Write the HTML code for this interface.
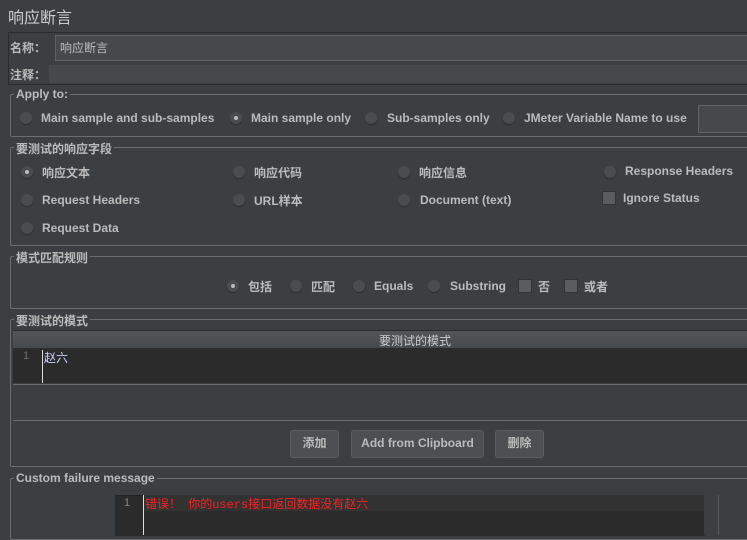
<!DOCTYPE html><html><head><meta charset="utf-8"><style>
body{margin:0;width:747px;height:532px;background:#3c3f41;overflow:hidden;position:relative;font-family:"Liberation Sans","Noto Sans CJK SC",sans-serif;color:#bbbbbb;font-size:12px}
.a{position:absolute;white-space:nowrap}
.b{font-weight:bold}
.fs{position:absolute;border:1px solid #6b6e70;border-radius:2px}
.lg{position:absolute;background:#3c3f41;padding:0 2px;top:-8px;left:3px;font-weight:bold;color:#bbbbbb}
.r{position:absolute;width:12px;height:12px;border-radius:50%;background:#4a4d4f;box-shadow:0 1px 1px #2a2a2a}
.r.on::after{content:"";position:absolute;left:4px;top:4px;width:4px;height:4px;border-radius:50%;background:#bbb}
.c{position:absolute;width:12px;height:12px;background:#5a5d5f;border:1px solid #333}
.btn{position:absolute;height:26px;border:1px solid #5a5d5f;border-radius:3px;background:#4c5052;text-align:center;line-height:25px;font-weight:bold;color:#bbb}
</style></head><body>
<div class="a" style="left:8px;top:4px;font-size:16px;color:#ccc">响应断言</div>
<div style="position:absolute;left:8px;top:32px;width:745px;height:51px;border:1px solid #2b2b2b"></div>
<div class="a b" style="left:10px;top:39px">名称：</div>
<div style="position:absolute;left:55px;top:35px;width:700px;height:24px;background:#45494a;border:1px solid #5f6365"></div>
<div class="a" style="left:60px;top:39px;color:#bbb">响应断言</div>
<div class="a b" style="left:10px;top:66px">注释：</div>
<div style="position:absolute;left:49px;top:65px;width:700px;height:18px;background:#45494a"></div>

<div class="fs" style="left:10px;top:94px;width:745px;height:41px"><span class="lg">Apply to:</span></div>
<div class="r" style="left:20px;top:112px"></div><div class="a b" style="left:41px;top:111px">Main sample and sub-samples</div>
<div class="r on" style="left:230px;top:112px"></div><div class="a b" style="left:251px;top:111px">Main sample only</div>
<div class="r" style="left:365px;top:112px"></div><div class="a b" style="left:387px;top:111px">Sub-samples only</div>
<div class="r" style="left:503px;top:112px"></div><div class="a b" style="left:524px;top:111px">JMeter Variable Name to use</div>
<div style="position:absolute;left:698px;top:105px;width:60px;height:26px;background:#45494a;border:1px solid #5f6365"></div>

<div class="fs" style="left:10px;top:147px;width:745px;height:97px"><span class="lg">要测试的响应字段</span></div>
<div class="r on" style="left:21px;top:166px"></div><div class="a b" style="left:42px;top:164px">响应文本</div>
<div class="r" style="left:233px;top:166px"></div><div class="a b" style="left:254px;top:164px">响应代码</div>
<div class="r" style="left:398px;top:166px"></div><div class="a b" style="left:419px;top:164px">响应信息</div>
<div class="r" style="left:604px;top:166px"></div><div class="a b" style="left:625px;top:164px">Response Headers</div>
<div class="r" style="left:21px;top:194px"></div><div class="a b" style="left:42px;top:193px">Request Headers</div>
<div class="r" style="left:233px;top:194px"></div><div class="a b" style="left:254px;top:192px">URL样本</div>
<div class="r" style="left:398px;top:194px"></div><div class="a b" style="left:420px;top:193px">Document (text)</div>
<div class="c" style="left:602px;top:191px"></div><div class="a b" style="left:623px;top:191px">Ignore Status</div>
<div class="r" style="left:21px;top:222px"></div><div class="a b" style="left:42px;top:221px">Request Data</div>

<div class="fs" style="left:10px;top:256px;width:745px;height:51px"><span class="lg">模式匹配规则</span></div>
<div class="r on" style="left:227px;top:280px"></div><div class="a b" style="left:248px;top:278px">包括</div>
<div class="r" style="left:290px;top:280px"></div><div class="a b" style="left:311px;top:278px">匹配</div>
<div class="r" style="left:353px;top:280px"></div><div class="a b" style="left:374px;top:279px">Equals</div>
<div class="r" style="left:428px;top:280px"></div><div class="a b" style="left:450px;top:279px">Substring</div>
<div class="c" style="left:518px;top:279px"></div><div class="a b" style="left:538px;top:278px">否</div>
<div class="c" style="left:564px;top:279px"></div><div class="a b" style="left:584px;top:278px">或者</div>

<div class="fs" style="left:10px;top:319px;width:745px;height:146px"><span class="lg">要测试的模式</span></div>
<div style="position:absolute;left:13px;top:330px;width:740px;height:18px;background:linear-gradient(#52565a,#46494b);border-top:1px solid #2b2b2b"></div>
<div class="a" style="left:379px;top:332px;color:#ccc">要测试的模式</div>
<div style="position:absolute;left:13px;top:348px;width:740px;height:35px;background:#2b2b2b"></div>
<div class="a" style="left:23px;top:350px;color:#707070;font-size:11px">1</div>
<div style="position:absolute;left:42px;top:350px;width:1px;height:33px;background:#ddd"></div>
<div class="a" style="left:44px;top:349px;color:#c8d8ff">赵六</div>
<div style="position:absolute;left:13px;top:384px;width:740px;height:35px;border-top:1px solid #6b6e70;border-bottom:1px solid #6b6e70"></div>
<div class="btn" style="left:290px;top:430px;width:47px">添加</div>
<div class="btn" style="left:351px;top:430px;width:131px">Add from Clipboard</div>
<div class="btn" style="left:495px;top:430px;width:47px">删除</div>

<div class="fs" style="left:10px;top:478px;width:745px;height:60px"><span class="lg">Custom failure message</span></div>
<div style="position:absolute;left:115px;top:495px;width:590px;height:40px;background:#2b2b2b;border-top:1px solid #222"></div>
<div style="position:absolute;left:144px;top:495px;width:560px;height:16px;background:#323232"></div>
<div style="position:absolute;left:704px;top:495px;width:14px;height:40px;background:#3c3f41;border-right:1px solid #5a5d5f"></div>
<div class="a" style="left:124px;top:497px;color:#888;font-size:11px">1</div>
<div style="position:absolute;left:143px;top:495px;width:1px;height:40px;background:#ddd"></div>
<div class="a" style="left:145px;top:495px;color:#ff2020;font-family:'Liberation Mono','Noto Sans CJK SC',monospace;font-size:12px">错误！ 你的users接口返回数据没有赵六</div>
</body></html>
